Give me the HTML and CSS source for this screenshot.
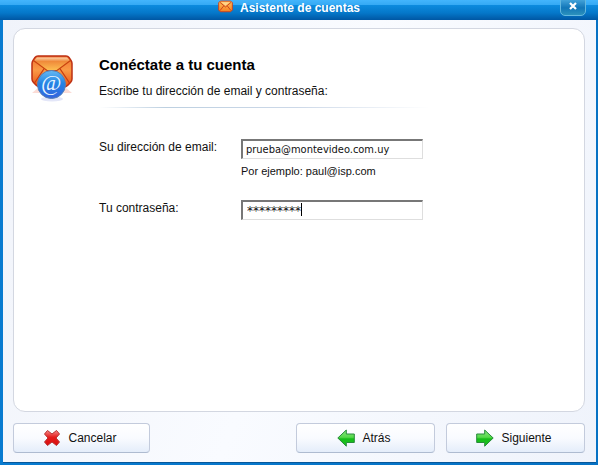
FILE: index.html
```html
<!DOCTYPE html>
<html lang="es">
<head>
<meta charset="utf-8">
<title>Asistente de cuentas</title>
<link rel="stylesheet" href="styles.css">
</head>
<body>
<div class="window">
  <header class="titlebar">
    <svg class="title-icon" viewBox="0 0 16 13" aria-hidden="true">
      <defs><linearGradient id="mini" x2="0" y2="1"><stop offset="0" stop-color="#ffc05a"/><stop offset="1" stop-color="#f77f20"/></linearGradient></defs>
      <path d="M2.500.7h11l1.800 1.800v7.800l-1.800 1.800h-11L.7 10.300V2.500z" fill="url(#mini)" stroke="#c9411c"/>
      <path d="M2 2l6 5 6-5M2 11l4-5M14 11l-4-5" fill="none" stroke="#c9411c"/>
      <path d="M3.500 2h9L8 5.600z" fill="#ffd58b"/>
    </svg>
    <span>Asistente de cuentas</span>
    <button class="close" type="button" aria-label="Cerrar">
      <svg viewBox="0 0 8 8" aria-hidden="true"><path d="M1 1l6 6M7 1L1 7" stroke="#fff" stroke-width="2.200"/></svg>
    </button>
  </header>
  <form class="content">
    <main class="panel">
      <svg class="account-icon" viewBox="0 0 42 48" aria-hidden="true">
        <defs>
          <linearGradient id="env" x2="0" y2="1"><stop offset="0" stop-color="#f0702f"/><stop offset=".45" stop-color="#fa9a45"/><stop offset="1" stop-color="#ea5318"/></linearGradient>
          <linearGradient id="flap" x2="0" y2="1"><stop offset="0" stop-color="#fbd0a8"/><stop offset=".3" stop-color="#f08a3a"/><stop offset="1" stop-color="#fdc052"/></linearGradient>
          <linearGradient id="ball" x2="0" y2="1"><stop offset="0" stop-color="#66b9f3"/><stop offset=".45" stop-color="#2385e4"/><stop offset="1" stop-color="#3463df"/></linearGradient>
        </defs>
        <path d="M1 38l6-5 3 5zM41 38l-6-5-3 5z" fill="#fbdcd6"/>
        <ellipse cx="21" cy="44" rx="11" ry="2.500" fill="#e3e6f8"/>
        <path d="M7 1h28q2 0 3 1.500l2 3q1 1.500 1 3V24q0 2-1.500 3.500l-3 3Q35 32 33 32H9q-2 0-3.500-1.500l-3-3Q1 26 1 24V8.500q0-1.500 1-3l2-3Q5 1 7 1z" fill="url(#env)" stroke="#bd3013" stroke-width="1.500"/>
        <path d="M13.500 13L3.500 28M28.500 13l10 15" fill="none" stroke="#c73d12" stroke-width="1.300"/>
        <path d="M6 2.500h30l3 3L26 15.500H16L3 5.500z" fill="url(#flap)"/>
        <path d="M2.500 5.500L16 15.500h10l13.500-10" fill="none" stroke="#c9420f" stroke-width="1.200"/>
        <circle cx="20.500" cy="29.500" r="14" fill="url(#ball)" stroke="#5580b4"/>
        <text class="at" x="20" y="35" text-anchor="middle">@</text>
      </svg>
      <div class="details">
        <h1>Conéctate a tu cuenta</h1>
        <p class="intro">Escribe tu dirección de email y contraseña:</p>
        <div class="rule"></div>
        <div class="fields">
          <label for="email">Su dirección de email:</label>
          <input id="email" class="email" type="text" value="prueba@montevideo.com.uy" aria-describedby="hint">
          <small id="hint">Por ejemplo: paul@isp.com</small>
          <label for="password">Tu contraseña:</label>
          <div class="secret">
            <input id="password" type="text" value="*********" autocomplete="off">
            <span class="caret"></span>
          </div>
        </div>
      </div>
    </main>
    <footer class="actions">
      <button class="action cancel" type="button">
        <svg viewBox="0 0 18 18" aria-hidden="true">
          <defs><linearGradient id="red" x2="0" y2="1"><stop offset="0" stop-color="#f58a8a"/><stop offset=".45" stop-color="#e51c1c"/><stop offset="1" stop-color="#d90d0d"/></linearGradient></defs>
          <path d="M4.500 1.500L9 5l4.500-3.500L16.500 5l-3.500 4 3.500 4-3 3.500L9 13l-4.500 3.500-3-3.500L5 9 1.500 5z" fill="url(#red)" stroke="#b83030" stroke-linejoin="round"/>
        </svg>
        Cancelar
      </button>
      <button class="action" type="button">
        <svg viewBox="0 0 18 18" aria-hidden="true">
          <defs><linearGradient id="green" x2="0" y2="1"><stop offset="0" stop-color="#8be67f"/><stop offset=".45" stop-color="#55d84a"/><stop offset=".55" stop-color="#15bd18"/><stop offset="1" stop-color="#20c322"/></linearGradient></defs>
          <path d="M.8 9l8.500-8v4h8v8.500h-8v3.700z" fill="url(#green)" stroke="#278b3a"/>
        </svg>
        Atrás
      </button>
      <button class="action" type="submit">
        <svg viewBox="0 0 18 18" aria-hidden="true"><path d="M17.200 9L8.700 1v4h-8v8.500h8v3.700z" fill="url(#green)" stroke="#278b3a"/></svg>
        Siguiente
      </button>
    </footer>
  </form>
</div>
</body>
</html>
```
FILE: styles.css
```css
* { box-sizing: border-box; }

body {
  margin: 0;
  font: 12px/16px "Liberation Sans", Arial, sans-serif;
  color: #111;
}

.window {
  display: flex;
  flex-direction: column;
  min-height: 100vh;
  padding: 0 2px 2px 3px;
  background: linear-gradient(90deg, #087bd0, #0672c4);
}

.titlebar {
  position: relative;
  display: flex;
  justify-content: center;
  gap: 7px;
  height: 20px;
  margin: 0 -2px 0 -3px;
  padding-right: 20px;
  background: linear-gradient(#43b5fc 0, #35a9f4 5px, #0c8bdf 5px, #0577c9 13px, #0057a3 20px);
  color: #fff;
  font-weight: bold;
}

.title-icon { width: 15px; height: 13px; }

.close {
  position: absolute;
  top: -4px;
  right: 12px;
  display: flex;
  align-items: center;
  justify-content: center;
  width: 26px;
  height: 20px;
  padding: 0;
  border: 1px solid #64b8df;
  border-radius: 5px;
  background: linear-gradient(#55b3e5, #1276b8 60%, #2b91bc);
}

.close svg { width: 8px; height: 8px; }

.content {
  display: flex;
  flex: 1;
  flex-direction: column;
  gap: 11px;
  padding: 8px 11px 9px 10px;
  border-bottom: 1px solid #07589b;
  background: linear-gradient(110deg, #f0f3fa, #f9fbff 50%, #eff3fb);
}

.panel {
  display: flex;
  flex: 1;
  align-items: flex-start;
  gap: 26px;
  padding: 26px 17px;
  border: 1px solid #d3d7e1;
  border-radius: 12px;
  background: #fff;
}

.account-icon { width: 42px; height: 48px; }

.at {
  fill: #e9f5ff;
  font: italic 22px "Liberation Serif", serif;
}

.details { flex: 1; }

h1 {
  margin: 0;
  font-size: 15px;
  line-height: 20px;
  color: #000;
}

.intro { margin: 8px 0; }

.rule {
  width: 330px;
  max-width: 100%;
  height: 1px;
  background: linear-gradient(90deg, #fff, #bdd0e1 20%, #ccd8e8 60%, #fff);
}

.fields {
  display: grid;
  grid-template-columns: 142px 182px;
  align-items: start;
  margin-top: 31px;
}

input {
  width: 100%;
  height: 20px;
  padding: 0 4px;
  border: 1px solid #dedede;
  border-top: 2px solid #777;
  border-left: 2px solid #777;
  background: #fff;
  color: #111;
  font: 12px "DejaVu Sans", sans-serif;
  outline: none;
}

.email { padding: 0 3px; font: 11px "DejaVu Sans Condensed", "DejaVu Sans", sans-serif; }

small {
  grid-column: 2;
  margin: 4px 0 21px;
  font-size: 11px;
}

.secret { position: relative; }

.caret {
  position: absolute;
  top: 3px;
  left: 60px;
  width: 1px;
  height: 13px;
  background: #000;
}

.actions {
  display: grid;
  grid-template-columns: 137fr 124fr 139fr 139fr;
  column-gap: 11px;
}

.action {
  display: flex;
  align-items: center;
  justify-content: center;
  gap: 7px;
  height: 30px;
  padding: 0 3px 0 0;
  border: 1px solid #c3cbdc;
  border-bottom-color: #aebbd0;
  border-radius: 4px;
  background: linear-gradient(#fff, #f9fbff 50%, #e4edfa);
  color: #111;
  font: inherit;
}

.action svg { width: 18px; height: 18px; }

.cancel { grid-column: 1 / 2; }

.cancel + .action { grid-column: 3; }
```
